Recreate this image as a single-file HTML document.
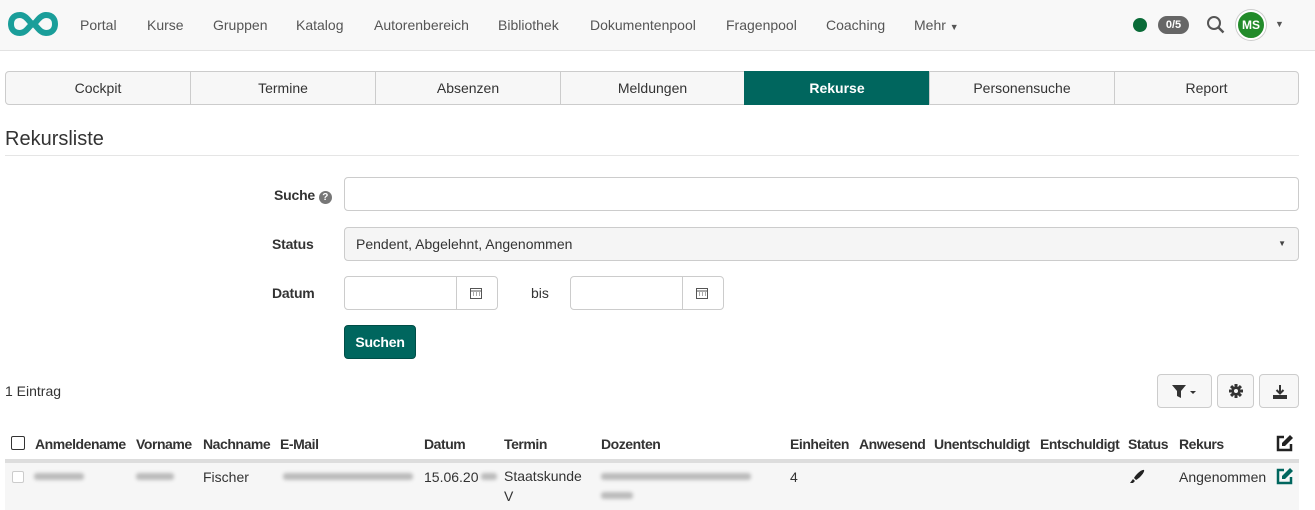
<!DOCTYPE html>
<html><head><meta charset="utf-8"><style>
*{box-sizing:border-box;margin:0;padding:0}
body{width:1315px;height:510px;overflow:hidden;background:#fff;font-family:"Liberation Sans",Arial,sans-serif;font-size:14px;color:#333;position:relative}
.a{position:absolute}
.nav{left:0;top:0;width:1315px;height:51px;background:#f8f8f8;border-bottom:1px solid #e2e2e2}
.nav span.n{position:absolute;top:17px;color:#555;font-size:14px}
.tab{position:absolute;top:71px;height:34px;border:1px solid #ccc;background:#f7f7f7;text-align:center;line-height:32px;font-size:14px;color:#333}
.tab.act{background:#00665e;color:#fff;border-color:#00665e;font-weight:bold}
.lbl{position:absolute;font-weight:bold;font-size:14px;color:#333;letter-spacing:-0.2px}
.inp{position:absolute;border:1px solid #ccc;border-radius:4px;background:#fff}
.btn{position:absolute;border:1px solid #ccc;border-radius:4px;background:#f7f7f7}
.th{position:absolute;top:436px;font-weight:bold;font-size:14px;color:#333;letter-spacing:-0.45px}
.td{position:absolute;top:469px;font-size:14px;color:#333}
.blur{position:absolute;height:7px;background:#bbb;border-radius:3px;filter:blur(1.8px)}
</style></head><body>
<div class="a nav">
<svg class="a" style="left:7px;top:11px" width="52" height="26" viewBox="0 0 52 26"><path d="M13 4C6 4 4 9 4 13s2 9 9 9 10-9 13-9 6 9 13 9 9-5 9-9-2-9-9-9-10 9-13 9S20 4 13 4z" fill="none" stroke="#1a9e9a" stroke-width="6"/></svg>
<span class="n" style="left:80px">Portal</span>
<span class="n" style="left:147px">Kurse</span>
<span class="n" style="left:213px">Gruppen</span>
<span class="n" style="left:296px">Katalog</span>
<span class="n" style="left:374px">Autorenbereich</span>
<span class="n" style="left:498px">Bibliothek</span>
<span class="n" style="left:590px">Dokumentenpool</span>
<span class="n" style="left:726px">Fragenpool</span>
<span class="n" style="left:826px">Coaching</span>
<span class="n" style="left:914px">Mehr <span style="font-size:9px">▼</span></span>
<div class="a" style="left:1133px;top:18px;width:14px;height:14px;border-radius:50%;background:#0a6b38"></div>
<div class="a" style="left:1158px;top:16px;width:31px;height:18px;border-radius:9px;background:#666;color:#fff;font-size:11px;font-weight:bold;text-align:center;line-height:18px">0/5</div>
<svg class="a" style="left:1206px;top:15px" width="20" height="20" viewBox="0 0 20 20"><circle cx="8" cy="8" r="6" fill="none" stroke="#555" stroke-width="2"/><path d="M12.5 12.5l5 5" stroke="#555" stroke-width="2.4"/></svg>
<div class="a" style="left:1236px;top:10px;width:30px;height:30px;border-radius:50%;background:#228b2a;border:2px solid #fff;box-shadow:0 0 0 1px #ccc;color:#fff;font-size:12px;font-weight:bold;text-align:center;line-height:26px">MS</div>
<span class="a" style="left:1275px;top:19px;font-size:9px;color:#555">▼</span>
</div>
<div class="tab" style="left:5px;width:186px;border-radius:4px 0 0 4px">Cockpit</div>
<div class="tab" style="left:190px;width:186px">Termine</div>
<div class="tab" style="left:375px;width:186px">Absenzen</div>
<div class="tab" style="left:560px;width:185px">Meldungen</div>
<div class="tab act" style="left:744px;width:186px">Rekurse</div>
<div class="tab" style="left:929px;width:186px">Personensuche</div>
<div class="tab" style="left:1114px;width:185px;border-radius:0 4px 4px 0">Report</div>
<div class="a" style="left:5px;top:128px;font-size:20px;color:#333">Rekursliste</div>
<div class="a" style="left:5px;top:155px;width:1294px;height:1px;background:#e5e5e5"></div>
<div class="lbl" style="left:274px;top:187px">Suche <span style="display:inline-block;width:13px;height:13px;border-radius:50%;background:#777;color:#fff;font-size:10px;text-align:center;line-height:13px">?</span></div>
<div class="inp" style="left:344px;top:177px;width:955px;height:34px"></div>
<div class="lbl" style="left:272px;top:236px">Status</div>
<div class="inp" style="left:344px;top:227px;width:955px;height:34px;background:#f5f5f5;padding:8px 11px">Pendent, Abgelehnt, Angenommen<span style="position:absolute;right:12px;top:11px;font-size:8px;color:#444">▼</span></div>
<div class="lbl" style="left:272px;top:285px">Datum</div>
<div class="inp" style="left:344px;top:276px;width:154px;height:34px"><div class="a" style="left:111px;top:0;width:1px;height:32px;background:#ccc"></div><svg class="a" style="left:125px;top:10px" width="12" height="12" viewBox="0 0 12 12"><rect x="0.5" y="1.5" width="11" height="10" fill="none" stroke="#555"/><path d="M0 4h12M3 6h1M6 6h1M9 6h1M3 8h1M6 8h1M9 8h1" stroke="#555"/></svg></div>
<div class="a" style="left:531px;top:285px">bis</div>
<div class="inp" style="left:570px;top:276px;width:154px;height:34px"><div class="a" style="left:111px;top:0;width:1px;height:32px;background:#ccc"></div><svg class="a" style="left:125px;top:10px" width="12" height="12" viewBox="0 0 12 12"><rect x="0.5" y="1.5" width="11" height="10" fill="none" stroke="#555"/><path d="M0 4h12M3 6h1M6 6h1M9 6h1M3 8h1M6 8h1M9 8h1" stroke="#555"/></svg></div>
<div class="a" style="left:344px;top:325px;width:72px;height:34px;background:#00665e;border:1px solid #004d47;border-radius:4px;color:#fff;font-weight:bold;text-align:center;line-height:32px;letter-spacing:-0.2px">Suchen</div>
<div class="a" style="left:5px;top:383px">1 Eintrag</div>
<div class="btn" style="left:1157px;top:374px;width:55px;height:34px"><svg class="a" style="left:14px;top:10px" width="26" height="14" viewBox="0 0 26 14"><path d="M0 0h14L9 6v7L5 11V6z" fill="#333"/><path d="M18 6h6l-3 3z" fill="#333"/></svg></div>
<div class="btn" style="left:1217px;top:374px;width:37px;height:34px"><svg class="a" style="left:11px;top:9px" width="14" height="14" viewBox="0 0 14 14"><g fill="#333"><circle cx="7" cy="7" r="4.5"/><rect x="5.5" y="0" width="3" height="14"/><rect x="0" y="5.5" width="14" height="3"/><rect x="5.5" y="0" width="3" height="14" transform="rotate(45 7 7)"/><rect x="5.5" y="0" width="3" height="14" transform="rotate(-45 7 7)"/></g><circle cx="7" cy="7" r="2" fill="#f7f7f7"/></svg></div>
<div class="btn" style="left:1259px;top:374px;width:40px;height:34px"><svg class="a" style="left:13px;top:10px" width="14" height="14" viewBox="0 0 14 14"><path d="M7 0v8M3.5 5L7 8.5 10.5 5" stroke="#333" stroke-width="2" fill="none"/><path d="M0 10h14v4H0z" fill="#333"/></svg></div>
<div class="a" style="left:11px;top:436px;width:14px;height:14px;border:1.5px solid #333;border-radius:2px"></div>
<div class="th" style="left:35px">Anmeldename</div>
<div class="th" style="left:136px">Vorname</div>
<div class="th" style="left:203px">Nachname</div>
<div class="th" style="left:280px">E-Mail</div>
<div class="th" style="left:424px">Datum</div>
<div class="th" style="left:504px">Termin</div>
<div class="th" style="left:601px">Dozenten</div>
<div class="th" style="left:790px">Einheiten</div>
<div class="th" style="left:859px">Anwesend</div>
<div class="th" style="left:934px">Unentschuldigt</div>
<div class="th" style="left:1040px">Entschuldigt</div>
<div class="th" style="left:1128px">Status</div>
<div class="th" style="left:1179px">Rekurs</div>
<svg class="a" style="left:1276px;top:434px" width="18" height="18" viewBox="0 0 18 18"><path d="M8 3H2v13h13v-6" stroke="#222" stroke-width="2.5" fill="none"/><path d="M14 1l3 3-8 8H6V9z" fill="#222"/></svg>
<div class="a" style="left:5px;top:459px;width:1294px;height:4px;background:#ddd"></div>
<div class="a" style="left:5px;top:463px;width:1294px;height:47px;background:#f6f6f6"></div>
<div class="a" style="left:12px;top:471px;width:12px;height:12px;border:1px solid #ccc;border-radius:2px;background:#fff"></div>
<div class="blur" style="left:34px;top:473px;width:50px"></div>
<div class="blur" style="left:136px;top:473px;width:38px"></div>
<div class="td" style="left:203px">Fischer</div>
<div class="blur" style="left:283px;top:473px;width:130px"></div>
<div class="td" style="left:424px">15.06.20</div>
<div class="blur" style="left:481px;top:473px;width:16px"></div>
<div class="td" style="left:504px;line-height:20px;top:466px">Staatskunde<br>V</div>
<div class="blur" style="left:601px;top:473px;width:150px"></div>
<div class="blur" style="left:601px;top:492px;width:32px"></div>
<div class="td" style="left:790px">4</div>
<svg class="a" style="left:1127px;top:467px" width="20" height="20" viewBox="0 0 20 20"><path d="M17 3c-2-1-8 4-10 8l2 2c4-2 9-8 8-10z" fill="#222"/><path d="M6 12l2 2-2 2H3z" fill="#222"/></svg>
<div class="td" style="left:1179px">Angenommen</div>
<svg class="a" style="left:1276px;top:467px" width="18" height="18" viewBox="0 0 18 18"><path d="M8 3H2v13h13v-6" stroke="#00665e" stroke-width="2.5" fill="none"/><path d="M14 1l3 3-8 8H6V9z" fill="#00665e"/></svg>
</body></html>
